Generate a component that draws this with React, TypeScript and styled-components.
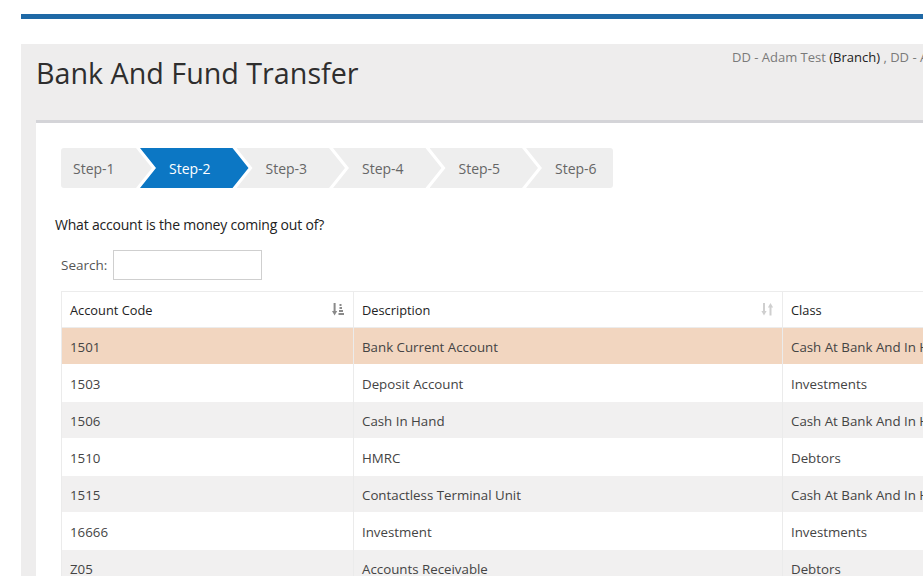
import React from "react";
import styled, { createGlobalStyle } from "styled-components";

const GlobalStyle = createGlobalStyle`
  html, body {
    margin: 0;
    padding: 0;
    background: #ffffff;
    overflow: hidden;
  }
  body {
    font-family: "Open Sans", "Noto Sans", Arial, sans-serif;
    color: #333;
  }
  * { box-sizing: border-box; }
`;

const Shell = styled.div`
  width: 1240px;
  padding: 14px 0 0 21px;
`;

const TopBar = styled.div`
  height: 5px;
  background: #1f69a6;
`;

const Panel = styled.section`
  margin-top: 25px;
  background: #eeeded;
  padding-left: 15px;
  min-height: 560px;
`;

const Header = styled.header`
  height: 76px;
  display: grid;
  grid-template-columns: 696px 1fr;
  align-items: start;
`;

const Title = styled.h1`
  margin: 0;
  padding-top: 12px;
  font-size: 28.7px;
  font-weight: 400;
  color: #2e2e2e;
  line-height: 34px;
`;

const Meta = styled.div`
  padding-top: 4px;
  font-size: 13px;
  line-height: 18px;
  color: #7a7a7a;
  white-space: nowrap;
  strong {
    font-weight: 400;
    color: #222;
  }
`;

const Card = styled.div`
  background: #ffffff;
  border-top: 3px solid #d4d4d8;
  padding: 25px 0 0 19px;
  min-height: 480px;
`;

const Indented = styled.div`
  padding-left: 6px;
`;

const Steps = styled.ol`
  list-style: none;
  margin: 0;
  padding: 0;
  width: 552px;
  height: 40px;
  display: flex;
  border-radius: 3px;
  overflow: hidden;
`;

type StepProps = { $active?: boolean; $first?: boolean; $last?: boolean };

const Step = styled.li<StepProps>`
  flex: 0 0 auto;
  height: 40px;
  width: ${(p) => (p.$first ? "91px" : p.$last ? "87px" : "108.5px")};
  margin-left: ${(p) => (p.$first ? "0" : "-12px")};
  padding-left: ${(p) => (p.$first ? "12px" : "29px")};
  display: flex;
  align-items: center;
  font-size: 14px;
  color: ${(p) => (p.$active ? "#ffffff" : "#666")};
  background: ${(p) => (p.$active ? "#0c77c4" : "#eeeeee")};
  clip-path: ${(p) =>
    p.$first
      ? "polygon(0 0, calc(100% - 16px) 0, 100% 50%, calc(100% - 16px) 100%, 0 100%)"
      : p.$last
      ? "polygon(0 0, 100% 0, 100% 100%, 0 100%, 16px 50%)"
      : "polygon(0 0, calc(100% - 16px) 0, 100% 50%, calc(100% - 16px) 100%, 0 100%, 16px 50%)"};
`;

const Question = styled.p`
  margin: 27px 0 0;
  font-size: 14px;
  line-height: 20px;
  color: #222;
  letter-spacing: -0.2px;
`;

const SearchRow = styled.label`
  margin-top: 15px;
  display: flex;
  align-items: center;
  gap: 6px;
  font-size: 13.5px;
  color: #555;
`;

const SearchInput = styled.input`
  width: 149px;
  height: 30px;
  border: 1px solid #cfcfcf;
  background: #fff;
  font: inherit;
  padding: 0 6px;
`;

const Table = styled.table`
  margin-top: 11px;
  border-collapse: collapse;
  width: 1000px;
  table-layout: fixed;
`;

const HeadCell = styled.th<{ $w?: number }>`
  width: ${(p) => (p.$w ? `${p.$w}px` : "auto")};
  height: 36px;
  padding: 0 8px;
  text-align: left;
  font-size: 12.8px;
  font-weight: 400;
  color: #222;
  border: 1px solid #ececec;
  background: #fff;
`;

const HeadInner = styled.span`
  display: flex;
  align-items: center;
  justify-content: space-between;
`;

const Row = styled.tr<{ $tone: "pick" | "plain" | "alt" }>`
  background: ${(p) =>
    p.$tone === "pick" ? "#f2d6c0" : p.$tone === "alt" ? "#f1f0f0" : "#ffffff"};
`;

const Cell = styled.td`
  height: 37px;
  padding: 1px 8px 0;
  font-size: 13.3px;
  color: #444;
  border: 1px solid #ebebeb;
  border-top-color: transparent;
  border-bottom-color: transparent;
  white-space: nowrap;
  overflow: hidden;
`;

const SortIcon = styled.svg`
  flex: 0 0 auto;
`;

const SortAsc = () => (
  <SortIcon width="13" height="13" viewBox="0 0 13 13" fill="#8a8a8a">
    <rect x="1.6" y="0" width="2" height="9" />
    <polygon points="0,8 5.2,8 2.6,12.5" />
    <rect x="7.5" y="1" width="2" height="2" />
    <rect x="7.5" y="4" width="2.5" height="2" />
    <rect x="7" y="7" width="4" height="2" />
    <rect x="6.5" y="10" width="5.5" height="2" />
  </SortIcon>
);

const SortBoth = () => (
  <SortIcon width="13" height="13" viewBox="0 0 13 13" fill="#cfcfcf">
    <rect x="2" y="0" width="2" height="9" />
    <polygon points="0.4,8 5.6,8 3,12.5" />
    <rect x="8.5" y="3.5" width="2" height="9" />
    <polygon points="6.9,4.5 12.1,4.5 9.5,0" />
  </SortIcon>
);

type Account = { code: string; description: string; cls: string };

const accounts: Account[] = [
  { code: "1501", description: "Bank Current Account", cls: "Cash At Bank And In Hand" },
  { code: "1503", description: "Deposit Account", cls: "Investments" },
  { code: "1506", description: "Cash In Hand", cls: "Cash At Bank And In Hand" },
  { code: "1510", description: "HMRC", cls: "Debtors" },
  { code: "1515", description: "Contactless Terminal Unit", cls: "Cash At Bank And In Hand" },
  { code: "16666", description: "Investment", cls: "Investments" },
  { code: "Z05", description: "Accounts Receivable", cls: "Debtors" },
];

const stepNames = ["Step-1", "Step-2", "Step-3", "Step-4", "Step-5", "Step-6"];

export default function App() {
  return (
    <>
      <GlobalStyle />
      <Shell>
        <TopBar />
        <Panel>
          <Header>
            <Title>Bank And Fund Transfer</Title>
            <Meta>
              DD - Adam Test <strong>(Branch)</strong> , DD - Adam Test <strong>(Company)</strong>
            </Meta>
          </Header>
          <Card>
            <Indented>
              <Steps>
                {stepNames.map((name, i) => (
                  <Step
                    key={name}
                    $first={i === 0}
                    $last={i === stepNames.length - 1}
                    $active={i === 1}
                  >
                    {name}
                  </Step>
                ))}
              </Steps>
            </Indented>
            <Question>What account is the money coming out of?</Question>
            <Indented>
              <SearchRow>
                Search:
                <SearchInput type="search" />
              </SearchRow>
              <Table>
                <thead>
                  <tr>
                    <HeadCell $w={292}>
                      <HeadInner>
                        Account Code
                        <SortAsc />
                      </HeadInner>
                    </HeadCell>
                    <HeadCell $w={429}>
                      <HeadInner>
                        Description
                        <SortBoth />
                      </HeadInner>
                    </HeadCell>
                    <HeadCell>Class</HeadCell>
                  </tr>
                </thead>
                <tbody>
                  {accounts.map((a, i) => (
                    <Row
                      key={a.code}
                      $tone={i === 0 ? "pick" : i % 2 === 0 ? "alt" : "plain"}
                    >
                      <Cell>{a.code}</Cell>
                      <Cell>{a.description}</Cell>
                      <Cell>{a.cls}</Cell>
                    </Row>
                  ))}
                </tbody>
              </Table>
            </Indented>
          </Card>
        </Panel>
      </Shell>
    </>
  );
}
